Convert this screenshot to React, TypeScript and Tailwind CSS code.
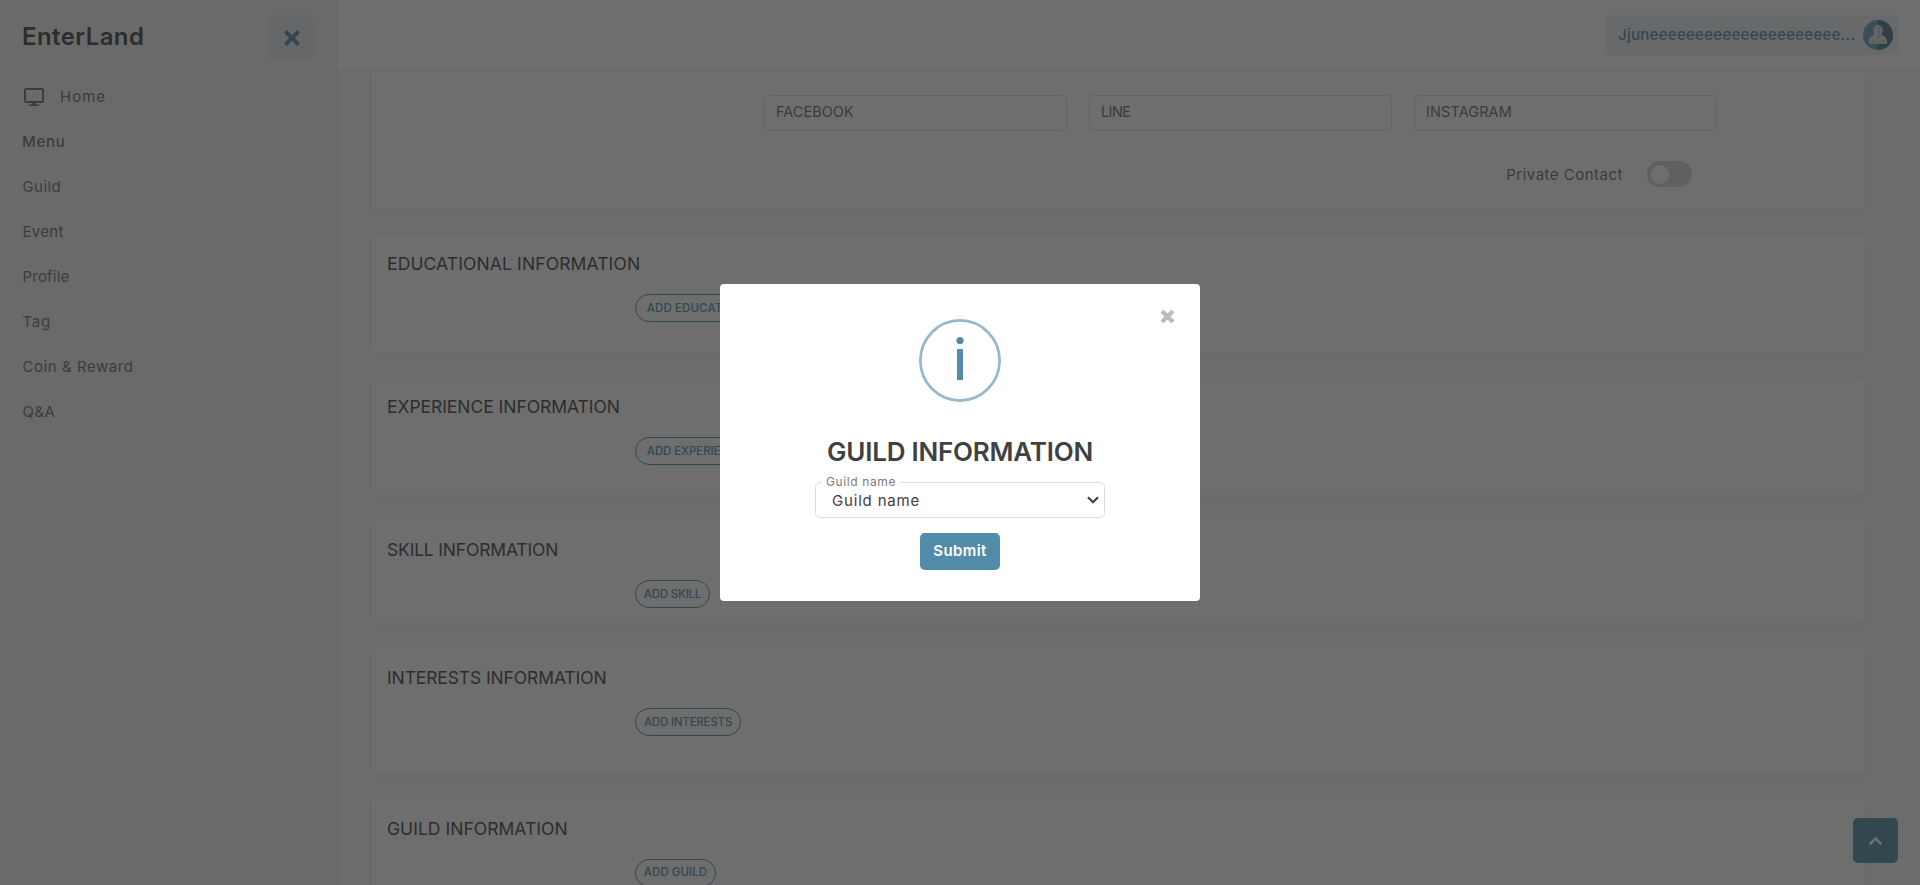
import { FaTimes } from "react-icons/fa";

const navItems = [
  { label: "Guild", tracking: "tracking-[0.42px]" },
  { label: "Event", tracking: "tracking-[0.31px]" },
  { label: "Profile", tracking: "tracking-[0.2px]" },
  { label: "Tag", tracking: "tracking-[0.75px]" },
  { label: "Coin & Reward", tracking: "tracking-[0.55px]" },
  { label: "Q&A", tracking: "tracking-[0.43px]" },
];

const contacts = [
  { label: "FACEBOOK", tracking: "tracking-[0.04px]" },
  { label: "LINE", tracking: "tracking-[-0.6px]" },
  { label: "INSTAGRAM", tracking: "tracking-[0.1px]" },
];

const sections = [
  { title: "EDUCATIONAL INFORMATION", titleTracking: "tracking-[0.12px]", action: "ADD EDUCATION", actionTracking: "tracking-[0.12px]", height: "h-[120px]", button: "w-[120px]" },
  { title: "EXPERIENCE INFORMATION", titleTracking: "tracking-[-0.04px]", action: "ADD EXPERIENCE", actionTracking: "tracking-[-0.1px]", height: "h-[120px]", button: "w-[121px]" },
  { title: "SKILL INFORMATION", titleTracking: "tracking-[-0.18px]", action: "ADD SKILL", actionTracking: "tracking-[-0.22px]", height: "h-[105px]", button: "w-[75px]" },
  { title: "INTERESTS INFORMATION", titleTracking: "tracking-[-0.12px]", action: "ADD INTERESTS", actionTracking: "tracking-[-0.2px]", height: "h-[127.5px]", button: "w-[106px]" },
  { title: "GUILD INFORMATION", titleTracking: "tracking-[0.04px]", action: "ADD GUILD", actionTracking: "tracking-[0.05px]", height: "h-[127.5px]", button: "w-[81px]" },
];

function Sidebar() {
  return (
    <aside className="box-content flex w-[337px] shrink-0 flex-col border-r border-[#eaeaea] bg-[#f4f4f4]">
      <div className="flex h-[75px] items-center justify-between pr-[23px] pl-[22px]">
        <h1 className="-mt-[2px] text-[24px] font-semibold tracking-[0.42px] text-[#414141]">EnterLand</h1>
        <button className="flex size-[45px] items-center justify-center rounded-[5px] bg-[#e7eaef] text-[#538cab]">
          <FaTimes size={22} />
        </button>
      </div>
      <nav className="flex flex-col text-[15px] text-[#6c6c6c]">
        <a className="flex h-[45px] items-center gap-[16px] pl-[24px] tracking-[1px]">
          <svg width="20" height="19" viewBox="0 0 20 19" fill="none">
            <rect x="1" y="1" width="18" height="13" rx="1" stroke="currentColor" strokeWidth="2" />
            <path d="M8.500 14.500h3.200l.5 2h2.300q1 0 1 .8t-1 .8h-9q-1 0-1-.8t1-.8h2.500z" fill="currentColor" />
          </svg>
          Home
        </a>
        <div className="flex h-[45px] items-center pl-[22px] font-medium tracking-[0.75px]">Menu</div>
        {navItems.map((item) => (
          <a key={item.label} className={`flex h-[45px] items-center pl-[22.5px] ${item.tracking}`}>
            {item.label}
          </a>
        ))}
      </nav>
    </aside>
  );
}

function Avatar() {
  return (
    <svg width="30" height="30" viewBox="0 0 30 30">
      <circle cx="15" cy="15" r="15" fill="#6b9fb8" />
      <path d="M15 0a15 15 0 0 1 0 30z" fill="#4b7287" />
      <path d="M6 24v-3c0-3.500 2.500-5.500 5.500-6l3.500 2.500 3.500-2.500c3 .5 5.500 2.500 5.500 6v3z" fill="#e2e2e2" />
      <rect x="10.500" y="5" width="9" height="11.500" rx="4.500" fill="#e2e2e2" />
      <path d="M15 5a4.500 4.500 0 0 1 4.500 4.500v2.500a4.500 4.500 0 0 1-4.500 4.500z" fill="#d0d0d0" />
      <path d="M9.800 20v4M20.200 20v4" stroke="#b4b4b4" strokeWidth="0.600" />
    </svg>
  );
}

function Header() {
  return (
    <header className="flex h-[71px] shrink-0 justify-end border-b border-[#eaeaea] bg-white pt-[15px] pr-[22px]">
      <div className="flex h-[40px] w-[293px] items-center justify-between rounded-[5px] bg-[#eceff2] pr-[5px] pl-[13px]">
        <span className="text-[15px] font-medium tracking-[0.29px] whitespace-nowrap text-[#538cab]">
          Jjuneeeeeeeeeeeeeeeeeeeee...
        </span>
        <Avatar />
      </div>
    </header>
  );
}

function ContactCard() {
  return (
    <section className="h-[139px] shrink-0 rounded-b-[6px] border border-t-0 border-[#f1f1f1] bg-white pt-[24px] shadow-[0_3px_12px_rgba(0,0,0,0.03)]">
      <div className="ml-[392px] flex gap-[22px]">
        {contacts.map((c) => (
          <div
            key={c.label}
            className={`flex h-[36px] w-[303px] items-center rounded-[5px] border border-[#dcdcdc] pb-[2px] pl-[11px] text-[14.5px] text-[#6c6c6c] ${c.tracking}`}
          >
            {c.label}
          </div>
        ))}
      </div>
      <div className="mt-[30px] mr-[173px] flex items-center justify-end gap-[24px]">
        <span className="pt-[2px] text-[15px] tracking-[0.5px] text-[#6c6c6c]">Private Contact</span>
        <span className="flex h-[26px] w-[45px] items-center rounded-full bg-[#d4d5d9] pl-[4px]">
          <span className="h-[19px] w-[18px] rounded-full bg-white" />
        </span>
      </div>
    </section>
  );
}

function Modal() {
  return (
    <div className="fixed inset-0 flex items-center justify-center bg-[rgba(35,35,35,0.66)]">
      <div className="relative flex h-[317px] w-[480px] flex-col items-center rounded-[4px] bg-white pt-[35px]">
        <button className="absolute top-[25px] right-[25px] text-[#bbbbbb]">
          <svg width="15" height="15" viewBox="0 0 15 15">
            <path d="M2 2l11 11M13 2L2 13" stroke="currentColor" strokeWidth="4.300" />
          </svg>
        </button>
        <svg width="82" height="83" viewBox="0 0 82 83" fill="none">
          <ellipse cx="41" cy="41.500" rx="39.600" ry="40.100" stroke="#98b9cb" strokeWidth="2.800" />
          <circle cx="41" cy="21.600" r="3.600" fill="#538cab" />
          <rect x="38" y="30" width="6" height="31" fill="#538cab" />
        </svg>
        <h2 className="mt-[31px] h-[38px] text-[26px] leading-[37px] font-semibold tracking-[-0.23px] text-[#414141]">
          GUILD INFORMATION
        </h2>
        <div className="relative mt-[11px] flex h-[36px] w-[290px] items-center justify-between rounded-[5px] border border-[#dedede] pr-[5px] pl-[16px]">
          <label className="absolute -top-[9px] left-[6px] bg-white px-[4px] text-[12px] leading-[16px] tracking-[0.62px] text-[#7c7c7c]">
            Guild name
          </label>
          <span className="pt-[2px] text-[15px] tracking-[0.82px] text-[#414141]">Guild name</span>
          <svg width="12" height="8" viewBox="0 0 12 8" fill="none">
            <path d="M1 1.200l5 5 5-5" stroke="#414141" strokeWidth="2.200" />
          </svg>
        </div>
        <button className="mt-[15px] flex h-[37px] w-[80px] items-center justify-center rounded-[5px] bg-[#538cab] text-[15px] font-semibold tracking-[0.4px] text-white">
          Submit
        </button>
      </div>
    </div>
  );
}

export default function App() {
  return (
    <div className="flex h-[885px] w-full overflow-hidden bg-[#f9f9f9] font-['Inter',sans-serif]">
      <Sidebar />
      <div className="flex min-w-0 flex-1 flex-col">
        <Header />
        <main className="flex min-h-0 flex-1 flex-col gap-[23px] overflow-hidden pr-[54px] pl-[33px]">
          <ContactCard />
          {sections.map((s) => (
            <section
              key={s.title}
              className={`${s.height} shrink-0 rounded-[6px] border border-[#f1f1f1] bg-white pt-[18px] pl-[15px] shadow-[0_3px_12px_rgba(0,0,0,0.03)]`}
            >
              <h3 className={`h-[24px] text-[17.5px] leading-[23px] font-normal text-[#414141] ${s.titleTracking}`}>
                {s.title}
              </h3>
              <button
                className={`mt-[18px] ml-[248px] flex h-[28px] items-center justify-center rounded-full border border-[#538cab] pt-[1px] text-[11.5px] font-medium whitespace-nowrap text-[#538cab] ${s.button} ${s.actionTracking}`}
              >
                {s.action}
              </button>
            </section>
          ))}
        </main>
      </div>
      <button className="fixed right-[22px] bottom-[22px] flex size-[45px] items-center justify-center rounded-[5px] bg-[#538cab]">
        <svg width="13" height="9" viewBox="0 0 13 9" fill="none">
          <path d="M1.500 7.500l5-5 5 5" stroke="white" strokeWidth="2.600" strokeLinecap="round" />
        </svg>
      </button>
      <Modal />
    </div>
  );
}
